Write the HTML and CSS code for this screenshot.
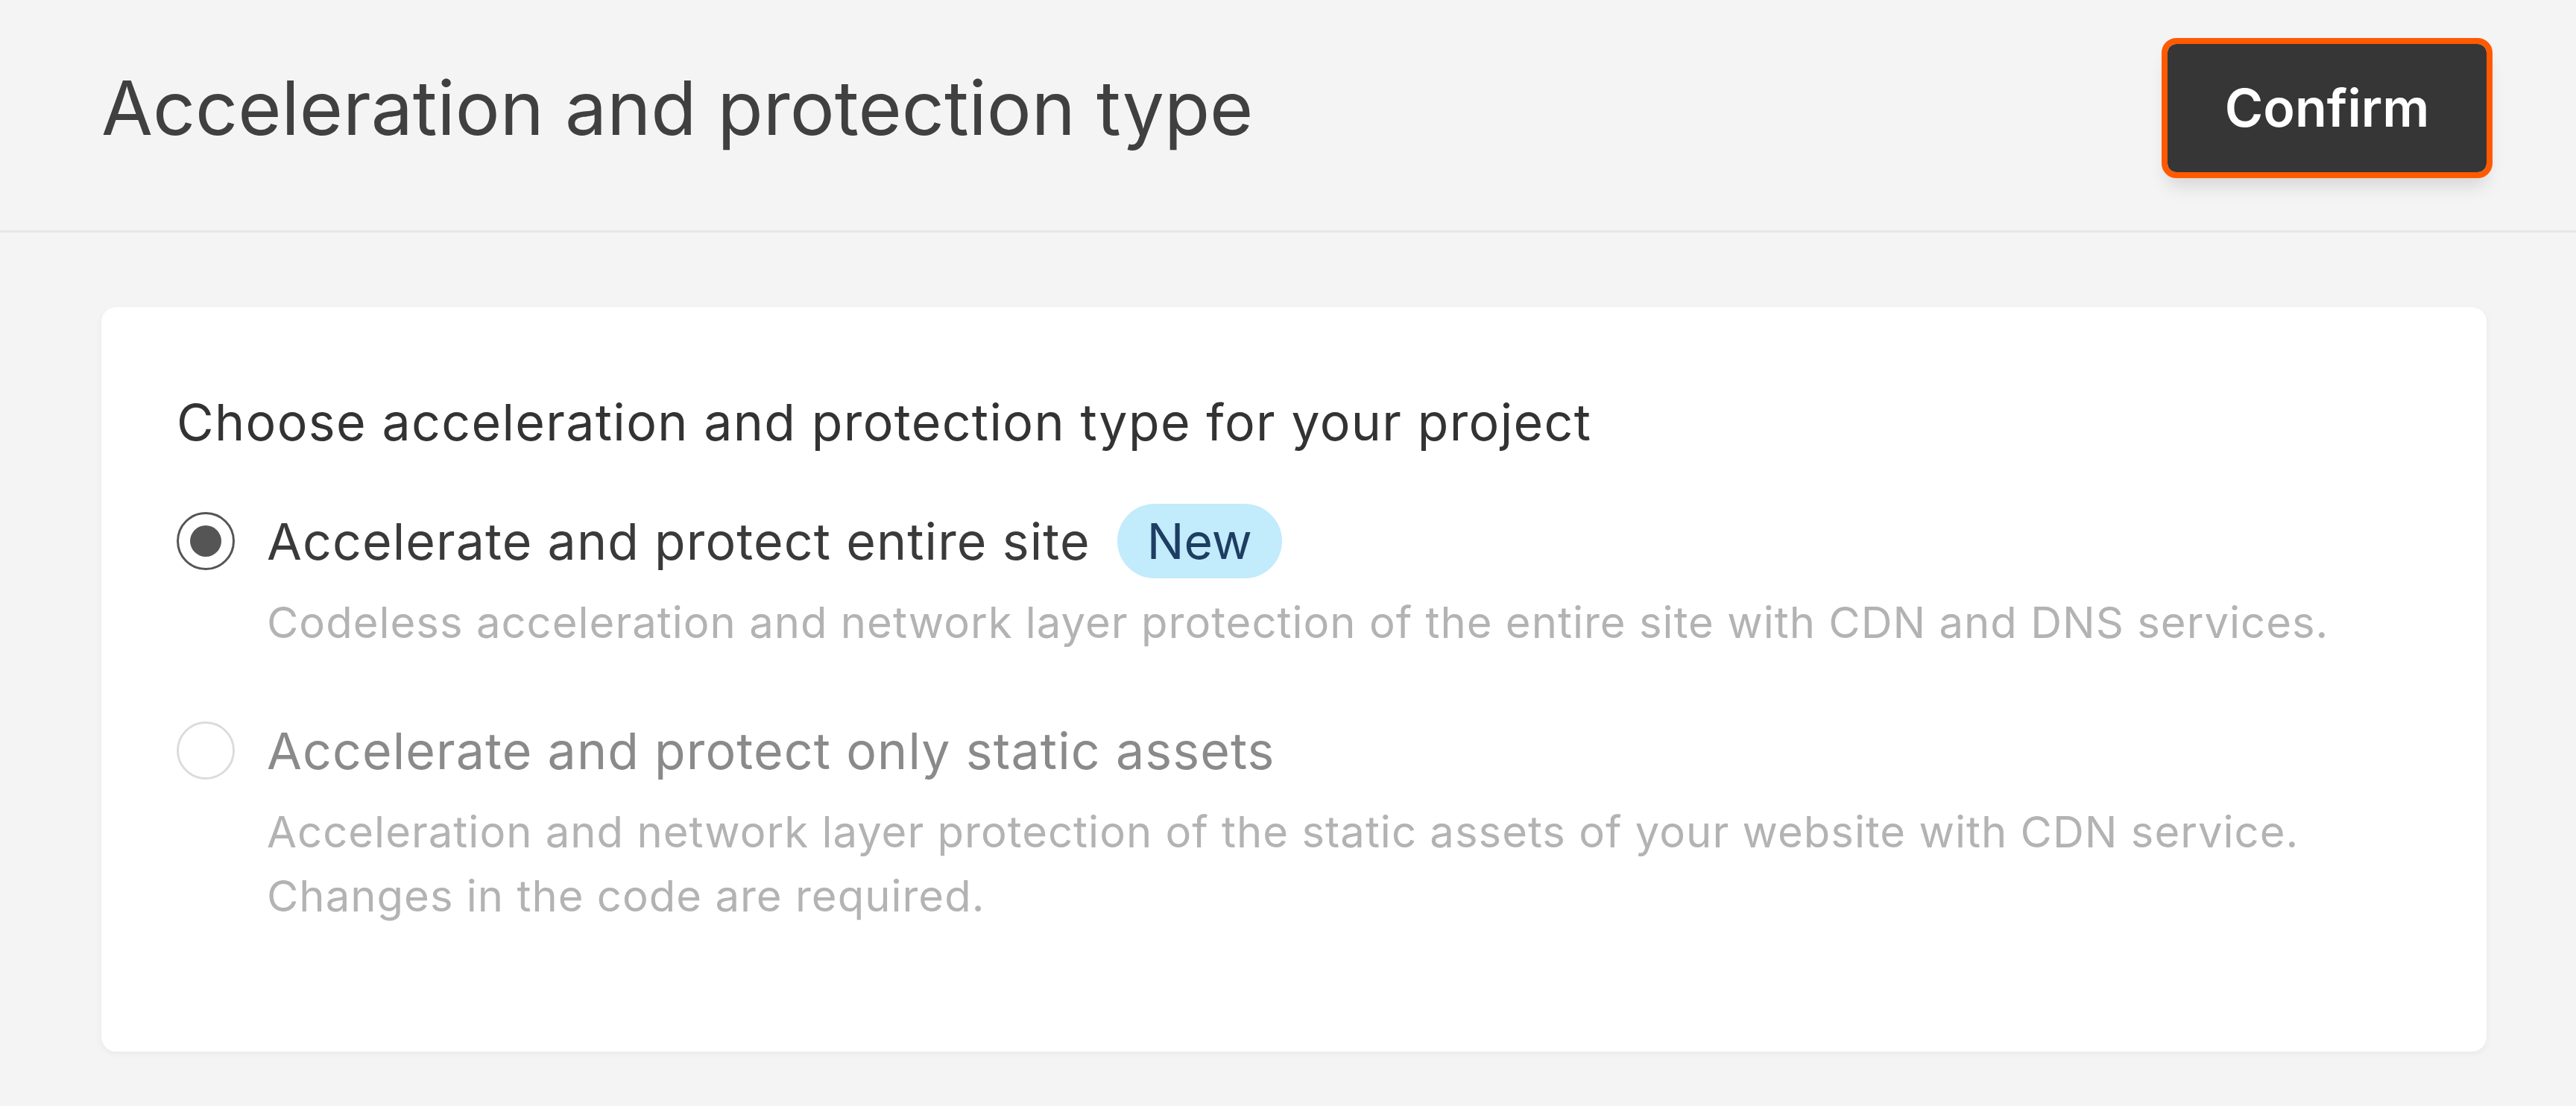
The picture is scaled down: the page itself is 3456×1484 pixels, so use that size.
FILE: index.html
```html
<!DOCTYPE html>
<html lang="en">
<head>
<meta charset="utf-8">
<title>Acceleration and protection type</title>
<link rel="stylesheet" href="styles.css">
</head>
<body>
<div class="page">
  <header class="header">
    <h1 class="title">Acceleration and protection type</h1>
    <button class="confirm" type="button">Confirm</button>
  </header>
  <main class="content">
    <section class="card">
      <h2 class="card-title">Choose acceleration and protection type for your project</h2>
      <div class="options">
        <div class="option">
          <div class="option-row">
            <span class="radio radio-checked"><span class="radio-dot"></span></span>
            <span class="label">Accelerate and protect entire site</span>
            <span class="badge">New</span>
          </div>
          <p class="desc">Codeless acceleration and network layer protection of the entire site with CDN and DNS services.</p>
        </div>
        <div class="option option-disabled">
          <div class="option-row">
            <span class="radio"></span>
            <span class="label">Accelerate and protect only static assets</span>
          </div>
          <p class="desc">Acceleration and network layer protection of the static assets of your website with CDN service.<br>Changes in the code are required.</p>
        </div>
      </div>
    </section>
  </main>
</div>
</body>
</html>
```

FILE: styles.css
```css
html, body {
  margin: 0;
  padding: 0;
  background: #f4f4f4;
}

body {
  font-family: Inter, "Noto Sans", "Liberation Sans", sans-serif;
  color: #333333;
  width: 3456px;
  height: 1484px;
  overflow: hidden;
}

.page {
  display: flex;
  flex-direction: column;
}

.header {
  display: flex;
  align-items: center;
  justify-content: space-between;
  height: 312px;
  box-sizing: border-box;
  padding: 60px 120px 80px 136px;
  border-bottom: 3px solid #e6e6e6;
}

.title {
  margin: 0;
  font-size: 100px;
  font-weight: 400;
  line-height: 1.2;
  color: #404040;
  letter-spacing: 0;
}

.confirm {
  width: 428px;
  height: 172px;
  box-sizing: border-box;
  border: none;
  border-radius: 12px;
  background: #363636;
  color: #ffffff;
  font-family: Inter, "Liberation Sans", sans-serif;
  font-size: 70px;
  font-weight: 600;
  outline: 8px solid #ff5a00;
  outline-offset: 0;
  box-shadow: 0 18px 24px rgba(0, 0, 0, 0.13);
  padding: 0;
}

.content {
  padding: 100px 120px 0 136px;
}

.card {
  background: #ffffff;
  border-radius: 20px;
  box-shadow: 0 3px 10px rgba(0, 0, 0, 0.05);
  padding: 103px 100px 166px 101px;
}

.card-title {
  margin: 0;
  font-size: 68px;
  font-weight: 400;
  letter-spacing: 1.35px;
  line-height: 102px;
  color: #333333;
}

.options {
  display: flex;
  flex-direction: column;
  gap: 79px;
  margin-top: 59px;
}

.option-row {
  display: flex;
  align-items: center;
  height: 100px;
}

.radio {
  width: 78px;
  height: 78px;
  box-sizing: border-box;
  border-radius: 50%;
  border: 3px solid #dcdcdc;
  display: flex;
  align-items: center;
  justify-content: center;
  flex-shrink: 0;
  background: #ffffff;
}

.radio-checked {
  border-color: #555555;
}

.radio-dot {
  width: 42px;
  height: 42px;
  border-radius: 50%;
  background: #555555;
}

.label {
  margin-left: 43px;
  font-size: 68px;
  letter-spacing: 1.1px;
  line-height: 100px;
  color: #3a3a3a;
}

.option-disabled .label {
  color: #8a8a8a;
}

.badge {
  margin-left: 36px;
  height: 100px;
  padding: 0 40px;
  border-radius: 50px;
  background: #c2ebfc;
  color: #1d3d62;
  font-size: 66px;
  line-height: 100px;
  box-sizing: border-box;
}

.desc {
  margin: 16px 0 0 121px;
  font-size: 58px;
  letter-spacing: 1px;
  line-height: 86px;
  color: #b3b3b3;
}
```
